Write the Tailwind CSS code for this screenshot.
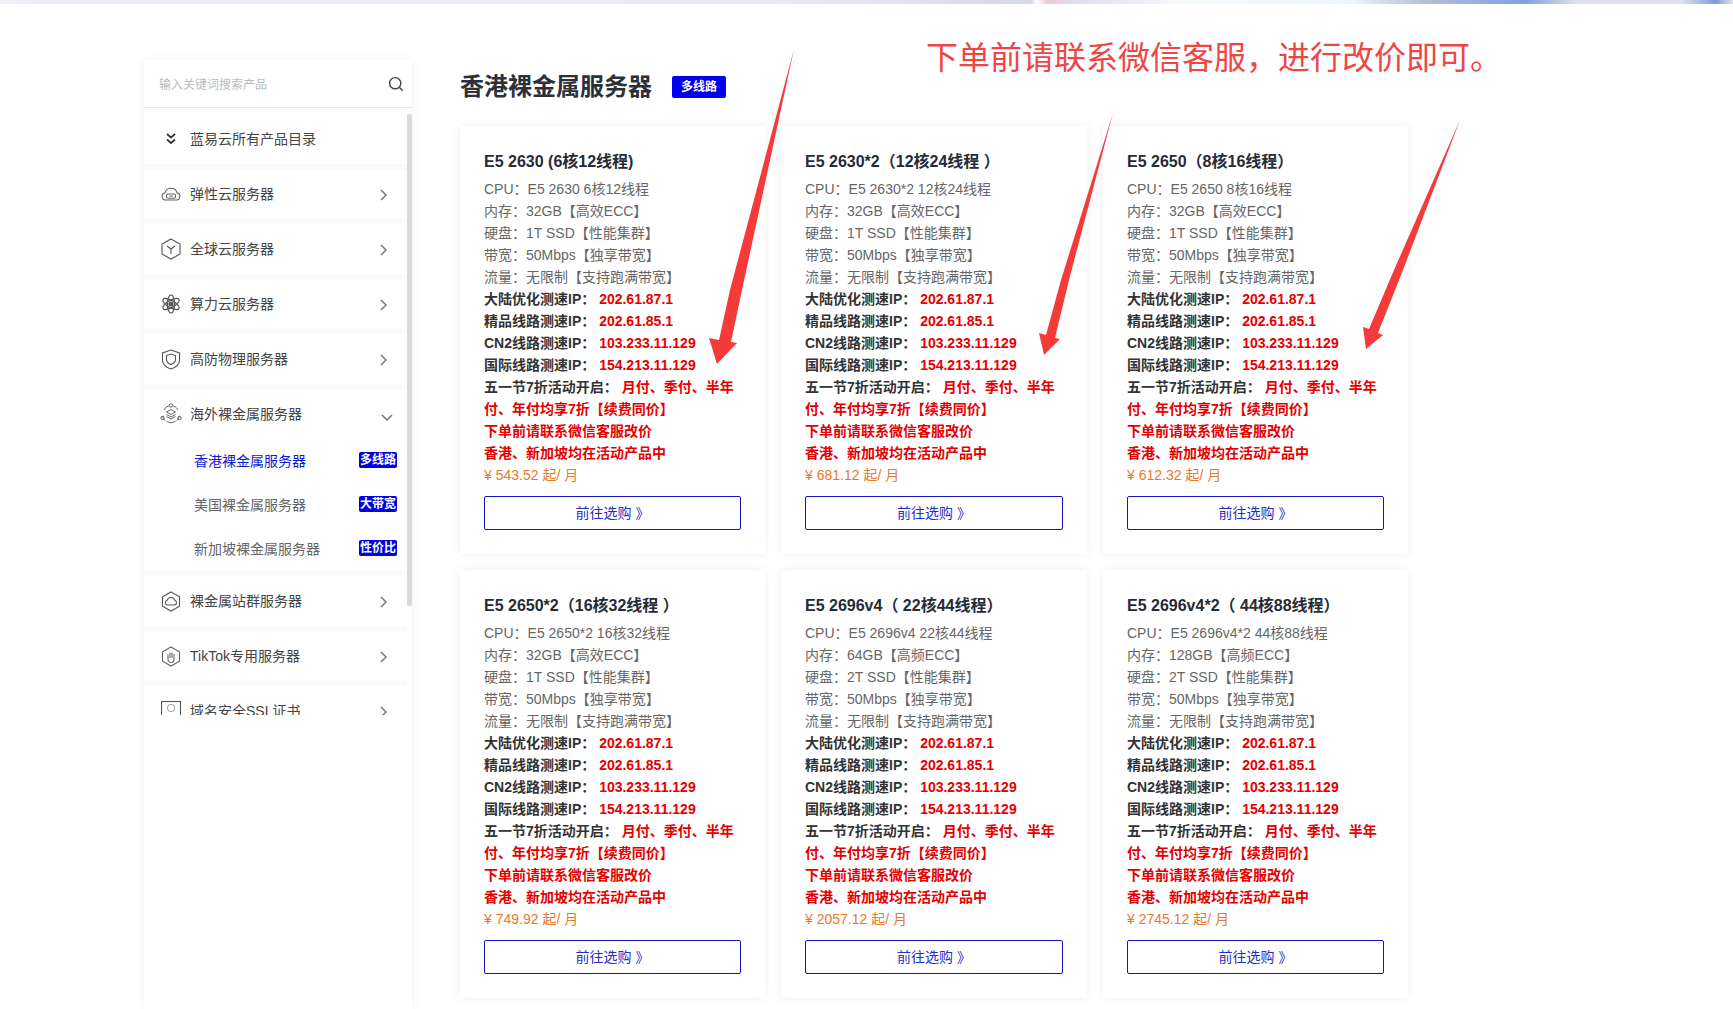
<!DOCTYPE html>
<html lang="zh-CN">
<head>
    <meta charset="UTF-8">
    <meta name="viewport" content="width=device-width, initial-scale=1.0">
    <title>香港裸金属服务器</title>
    <script src="https://cdn.jsdelivr.net/npm/@tailwindcss/browser@4"></script>
</head>
<body class="relative h-screen overflow-hidden bg-white font-['Liberation_Sans','Noto_Sans_CJK_SC',sans-serif]">

    <!-- Banner edge -->
    <div class="h-1 bg-[linear-gradient(90deg,#eef0f7_0%,#e9ecf4_43%,#dfe2ec_53%,#d5d8e6_59.5%,#ffffff_59.8%,#f0c8d4_60.5%,#dcdfec_62%,#f4f9fc_68%,#eef5fa_78%,#b8c0d8_82%,#7fa0dc_88%,#dfe2ec_91%,#dfe2ec_97%,#7f9bd0_99%,#dfe2ec_100%)]"></div>

    <div class="flex pl-[144px] pt-[56px]">

        <!-- Sidebar -->
        <aside class="w-[268px] h-[949px] shrink-0 bg-white shadow-[0_0_10px_rgba(0,0,0,0.06)]">
            <div class="h-[48px] flex items-center justify-between pl-[15px] pr-[8px] border-b border-[#e6e6e6]">
                <span class="text-xs text-[#bbbbbb] mt-[2px]">输入关键词搜索产品</span>
                <svg class="w-[16px] h-[16px]" viewBox="0 0 16 16" fill="none" stroke="#444" stroke-width="1.4"><circle cx="7.2" cy="7.2" r="5.6"/><path d="M11.5 11.5l3.2 3.2"/></svg>
            </div>

            <div class="relative h-[607px] overflow-hidden text-sm text-[#444]">
                <div class="absolute right-0 top-[6px] w-[5px] h-[492px] rounded-sm bg-[#d9d9d9]"></div>
                <div class="w-[263px] bg-[#fafafa] flex flex-col gap-[5px]">

                    <div class="h-[56px] bg-white flex items-center pl-[17px] pt-[6px]">
                        <svg class="w-[20px] h-[20px]" viewBox="0 0 20 20" fill="none" stroke="#333" stroke-width="1.7"><path d="M6 5l4 3.5L14 5M6 10.5l4 3.5 4-3.5"/></svg>
                        <span class="ml-[9px]">蓝易云所有产品目录</span>
                    </div>

                    <div class="h-[50px] bg-white flex items-center pl-[17px] pr-[20px]">
                        <svg class="w-[20px] h-[20px]" viewBox="0 0 20 20" fill="none" stroke="#666" stroke-width="1.1"><path d="M5 16h10.5a3.6 3.6 0 0 0 .6-7.1A6.3 6.3 0 0 0 4 8.7 3.7 3.7 0 0 0 5 16z"/><rect x="5.5" y="10" width="9" height="4.2" rx="1.5"/><path d="M8.4 12.1h3.2"/></svg>
                        <span class="ml-[9px] flex-1">弹性云服务器</span>
                        <svg class="w-[7px] h-[12px] mt-[1px]" viewBox="0 0 7 12" fill="none" stroke="#777" stroke-width="1.5"><path d="M1 1l5 5-5 5"/></svg>
                    </div>

                    <div class="h-[50px] bg-white flex items-center pl-[17px] pr-[20px]">
                        <svg class="w-[20px] h-[22px]" viewBox="0 0 20 22" fill="none" stroke="#555" stroke-width="1.1"><path d="M10 1l9 5v10l-9 5-9-5V6z"/><path d="M6 8l4 3 4-3M10 11v5"/></svg>
                        <span class="ml-[9px] flex-1">全球云服务器</span>
                        <svg class="w-[7px] h-[12px] mt-[1px]" viewBox="0 0 7 12" fill="none" stroke="#777" stroke-width="1.5"><path d="M1 1l5 5-5 5"/></svg>
                    </div>

                    <div class="h-[50px] bg-white flex items-center pl-[17px] pr-[20px]">
                        <svg class="w-[20px] h-[20px]" viewBox="0 0 20 20" fill="none" stroke="#555" stroke-width="1.2"><ellipse cx="10" cy="10" rx="3.6" ry="9.2"/><ellipse cx="10" cy="10" rx="3.6" ry="9.2" transform="rotate(60 10 10)"/><ellipse cx="10" cy="10" rx="3.6" ry="9.2" transform="rotate(120 10 10)"/><circle cx="10" cy="10" r="2" fill="#555"/></svg>
                        <span class="ml-[9px] flex-1">算力云服务器</span>
                        <svg class="w-[7px] h-[12px] mt-[1px]" viewBox="0 0 7 12" fill="none" stroke="#777" stroke-width="1.5"><path d="M1 1l5 5-5 5"/></svg>
                    </div>

                    <div class="h-[50px] bg-white flex items-center pl-[17px] pr-[20px]">
                        <svg class="w-[20px] h-[21px]" viewBox="0 0 20 21" fill="none" stroke="#555" stroke-width="1.1"><path d="M10 1l8.500 3v7c0 4.500-4 7.500-8.500 9-4.500-1.500-8.500-4.500-8.500-9V4z"/><path d="M10 5l4.500 1.600v4c0 2.400-2 4-4.500 5-2.500-1-4.500-2.600-4.500-5v-4z"/></svg>
                        <span class="ml-[9px] flex-1">高防物理服务器</span>
                        <svg class="w-[7px] h-[12px] mt-[1px]" viewBox="0 0 7 12" fill="none" stroke="#777" stroke-width="1.5"><path d="M1 1l5 5-5 5"/></svg>
                    </div>

                    <div class="bg-white">
                        <div class="h-[50px] flex items-center pl-[16px] pr-[14px]">
                            <svg class="w-[22px] h-[22px]" viewBox="0 0 22 22" fill="none" stroke="#666" stroke-width="1"><path d="M4 7a8.500 8.500 0 0 1 5-4.300M13 2.700A8.500 8.500 0 0 1 18 7M19.500 13a9 9 0 0 1-2.500 4.500M5 17.500A9 9 0 0 1 2.500 13M6.500 18.500a9 9 0 0 0 9 0"/><circle cx="11" cy="2.500" r="1.700"/><circle cx="2.500" cy="15" r="1.700"/><circle cx="19.500" cy="15" r="1.700"/><path d="M11 6.500l4.500 2.500-4.500 2.500L6.500 9zM6.500 11.500l4.500 2.500 4.500-2.500M6.500 13.500l4.500 2.500 4.500-2.500"/></svg>
                            <span class="ml-[8px] flex-1">海外裸金属服务器</span>
                            <svg class="w-[12px] h-[7px] mt-[6px]" viewBox="0 0 12 7" fill="none" stroke="#777" stroke-width="1.5"><path d="M1 1l5 5 5-5"/></svg>
                        </div>
                        <div class="h-[44px] flex items-center justify-between pl-[50px] pr-[10px]">
                            <span class="text-[#0c1cd0]">香港裸金属服务器</span>
                            <span class="w-[38px] h-[16px] mb-[2px] flex items-center justify-center rounded-[2px] bg-[#0000e6] text-xs font-bold text-white">多线路</span>
                        </div>
                        <div class="h-[44px] flex items-center justify-between pl-[50px] pr-[10px]">
                            <span class="text-[#666]">美国裸金属服务器</span>
                            <span class="w-[38px] h-[16px] mb-[2px] flex items-center justify-center rounded-[2px] bg-[#0000e6] text-xs font-bold text-white">大带宽</span>
                        </div>
                        <div class="h-[44px] flex items-center justify-between pl-[50px] pr-[10px]">
                            <span class="text-[#666]">新加坡裸金属服务器</span>
                            <span class="w-[38px] h-[16px] mb-[2px] flex items-center justify-center rounded-[2px] bg-[#0000e6] text-xs font-bold text-white">性价比</span>
                        </div>
                    </div>

                    <div class="h-[50px] bg-white flex items-center pl-[17px] pr-[20px]">
                        <svg class="w-[20px] h-[21px]" viewBox="0 0 20 21" fill="none" stroke="#555" stroke-width="1.1"><path d="M10 1l8.500 4.800v9.400L10 20l-8.500-4.800V5.800z"/><path d="M6.500 14h7a2.300 2.300 0 0 0 .4-4.500 4 4 0 0 0-7.700-.2A2.400 2.400 0 0 0 6.500 14z"/></svg>
                        <span class="ml-[9px] flex-1">裸金属站群服务器</span>
                        <svg class="w-[7px] h-[12px] mt-[1px]" viewBox="0 0 7 12" fill="none" stroke="#777" stroke-width="1.5"><path d="M1 1l5 5-5 5"/></svg>
                    </div>

                    <div class="h-[50px] bg-white flex items-center pl-[17px] pr-[20px]">
                        <svg class="w-[20px] h-[21px]" viewBox="0 0 20 21" fill="none" stroke="#666" stroke-width="1.1"><path d="M10 1l8.500 4.800v9.400L10 20l-8.500-4.800V5.800z"/><path d="M7 14.500V8.500M9 12V6.500M11 12V6.500M13 12.500V8M7 14.500c1 1.500 2 2 3.500 2s2.500-1.500 2.500-4"/></svg>
                        <span class="ml-[9px] flex-1">TikTok专用服务器</span>
                        <svg class="w-[7px] h-[12px] mt-[1px]" viewBox="0 0 7 12" fill="none" stroke="#777" stroke-width="1.5"><path d="M1 1l5 5-5 5"/></svg>
                    </div>

                    <div class="h-[50px] bg-white flex items-center pl-[17px] pr-[20px]">
                        <svg class="w-[20px] h-[20px]" viewBox="0 0 20 20" fill="none" stroke="#555" stroke-width="1.1"><rect x="0.500" y="0.500" width="19" height="19"/><circle cx="10" cy="7" r="3.500" stroke="#aaa"/></svg>
                        <span class="ml-[9px] flex-1">域名安全SSL证书</span>
                        <svg class="w-[7px] h-[12px] mt-[1px]" viewBox="0 0 7 12" fill="none" stroke="#777" stroke-width="1.5"><path d="M1 1l5 5-5 5"/></svg>
                    </div>
                </div>
            </div>
        </aside>

        <!-- Product list -->
        <main class="ml-[48px] w-[948px]">
            <div class="h-[66px] flex items-start">
                <div class="flex items-center h-[54px]">
                    <h1 class="text-2xl font-bold text-[#2b303b]">香港裸金属服务器</h1>
                    <span class="ml-[20px] w-[54px] h-[22px] flex items-center justify-center rounded-[2px] bg-[#0000f0] text-xs font-bold text-white">多线路</span>
                </div>
            </div>
            <div id="product-grid" class="grid grid-cols-[305px_306px_305px] gap-x-[16px] gap-y-[16px]"></div>
        </main>
    </div>

    <!-- Annotations pasted on top of the page -->
    <div class="absolute left-[926px] top-[36px] text-[32px] leading-[44px] whitespace-nowrap text-[#f04545]">下单前请联系微信客服，进行改价即可。</div>
    <svg class="absolute left-0 top-0 w-[1733px] h-[1009px] pointer-events-none" viewBox="0 0 1733 1009" fill="#f53a3a">
        <polygon points="794,49 742,290 731,342 737,343 717,364 709,338 719,340 730,290"/>
        <polygon points="1113,113 1069,280 1055,338 1060,339 1044,355 1039,333 1046,335 1061,280"/>
        <polygon points="1460,120 1403,270 1378,333 1383,335 1366,349 1363,327 1369,329 1394,270"/>
    </svg>

    <script>
        const products = [
            { title: 'E5 2630 (6核12线程)', cpu: 'E5 2630 6核12线程', ram: '32GB【高效ECC】', disk: '1T SSD【性能集群】', price: '543.52' },
            { title: 'E5 2630*2（12核24线程 ）', cpu: 'E5 2630*2 12核24线程', ram: '32GB【高效ECC】', disk: '1T SSD【性能集群】', price: '681.12' },
            { title: 'E5 2650（8核16线程）', cpu: 'E5 2650 8核16线程', ram: '32GB【高效ECC】', disk: '1T SSD【性能集群】', price: '612.32' },
            { title: 'E5 2650*2（16核32线程 ）', cpu: 'E5 2650*2 16核32线程', ram: '32GB【高效ECC】', disk: '1T SSD【性能集群】', price: '749.92' },
            { title: 'E5 2696v4（ 22核44线程）', cpu: 'E5 2696v4 22核44线程', ram: '64GB【高频ECC】', disk: '2T SSD【性能集群】', price: '2057.12' },
            { title: 'E5 2696v4*2（ 44核88线程）', cpu: 'E5 2696v4*2 44核88线程', ram: '128GB【高频ECC】', disk: '2T SSD【性能集群】', price: '2745.12' },
        ];

        const ips = [
            ['大陆优化测速IP：', '202.61.87.1'],
            ['精品线路测速IP：', '202.61.85.1'],
            ['CN2线路测速IP：', '103.233.11.129'],
            ['国际线路测速IP：', '154.213.11.129'],
        ];

        const grid = document.getElementById('product-grid');

        products.forEach(item => {
            const ipRows = ips.map(([label, ip]) =>
                `<p class="font-bold text-[#333]">${label} <span class="text-[#e60000]">${ip}</span></p>`
            ).join('');

            grid.innerHTML += `
                <div class="h-[428px] bg-white px-[24px] pt-[22px] rounded-[2px] shadow-[0_0_12px_rgba(0,0,0,0.07)]">
                    <h3 class="text-base leading-[28px] mb-[2px] font-bold text-[#262b36]">${item.title}</h3>
                    <div class="text-sm leading-[22px] text-[#666]">
                        <p>CPU：${item.cpu}</p>
                        <p>内存：${item.ram}</p>
                        <p>硬盘：${item.disk}</p>
                        <p>带宽：50Mbps【独享带宽】</p>
                        <p>流量：无限制【支持跑满带宽】</p>
                        ${ipRows}
                        <p class="font-bold text-[#333]">五一节7折活动开启： <span class="text-[#e60000]">月付、季付、半年付、年付均享7折【续费同价】</span></p>
                        <p class="font-bold text-[#e60000]">下单前请联系微信客服改价</p>
                        <p class="font-bold text-[#e60000]">香港、新加坡均在活动产品中</p>
                        <p class="text-[#e8792b]">¥ ${item.price} 起/ 月</p>
                    </div>
                    <a class="mt-[10px] h-[34px] flex items-center justify-center rounded-[2px] border border-[#1414c0] text-sm text-[#1f2fc4]">前往选购 》</a>
                </div>
            `;
        });
    </script>
</body>
</html>
